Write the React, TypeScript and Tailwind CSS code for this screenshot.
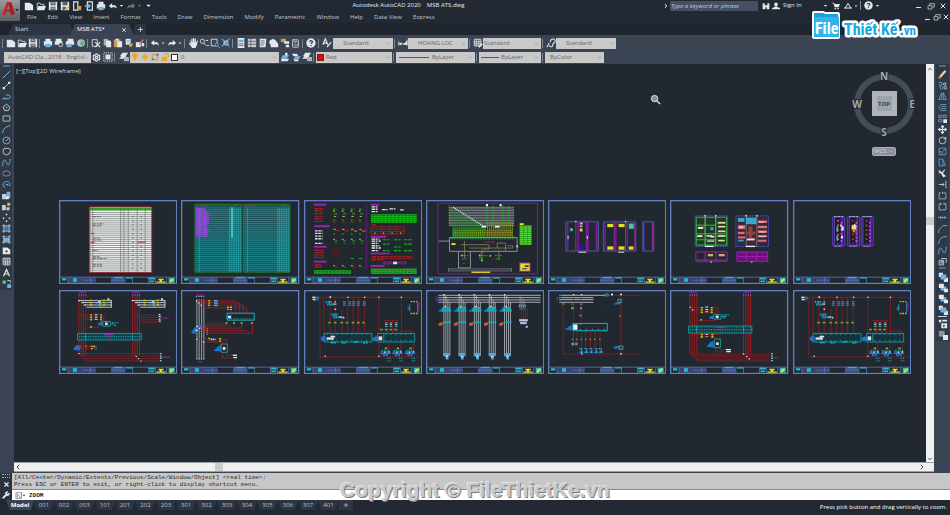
import type { ReactNode } from "react";
import {
  Calculator,
  ChevronDown,
  ChevronLeft,
  ChevronRight,
  ChevronUp,
  Minus,
  Move,
  Plus,
  RotateCw,
  Settings,
  Wrench,
  X,
} from "lucide-react";

/* ---------- icons ---------- */

const L = "#e4e7eb";
const B = "#6fb3e6";

const glyphs: Record<string, ReactNode> = {
  new: <path fill={L} d="M1 2h6l4 3v6H1z" />,
  open: (
    <>
      <path fill="none" stroke={L} d="M1.5 10V2.5h3l1 1.5h4v2" />
      <path fill={L} d="M3 6h9l-2 5H1z" />
    </>
  ),
  save: (
    <>
      <path fill={L} d="M1 1h10v10H1z" />
      <path fill="#56606e" d="M3 1h6v4H3zM3 7h6v4H3z" />
      <path fill={L} d="M4 2h4v1H4zM4 8h4v1H4z" />
    </>
  ),
  saveAs: (
    <>
      <path fill={L} d="M1 1h10v10H1z" />
      <path fill="#56606e" d="M3 1h6v4H3zM3 7h4v4H3z" />
      <path stroke="#e8b05a" strokeWidth="2" d="M6 11l5-5" />
    </>
  ),
  mobile: (
    <>
      <path fill="none" stroke={L} strokeWidth="1.4" d="M2 1h5v10H2z" />
      <path fill="#d9a04a" d="M6 6h5v5H6z" />
    </>
  ),
  phoneOut: (
    <>
      <path fill="none" stroke={L} strokeWidth="1.4" d="M4 1h6v10H4z" />
      <path stroke={B} strokeWidth="2" d="M1 6h6M5 4l2 2-2 2" fill="none" />
    </>
  ),
  plot: (
    <>
      <path fill={L} d="M3 1h6v3H3zM1 4h10v5H1z" />
      <path fill={B} d="M3 7h6v4H3z" />
    </>
  ),
  preview: (
    <>
      <path fill={L} d="M2 1h7v3H2zM1 4h9v4H1z" />
      <circle cx="8" cy="8" r="2.4" fill="#3b4453" stroke={L} />
    </>
  ),
  publish: (
    <>
      <path fill={L} d="M3 1h7v3H3zM1 4h10v4H1z" />
      <path fill={B} d="M2 7h6v4H2z" />
    </>
  ),
  globe: (
    <>
      <circle cx="6" cy="6" r="4.6" fill="#a9c9d8" />
      <path fill="#6cae6c" d="M6 2l4 3-2 5-3-2z" />
    </>
  ),
  find: (
    <>
      <path fill="none" stroke={L} d="M1.5 2h6v8h-6z" />
      <path stroke={L} strokeWidth="1.4" d="M5 5l6 6M11 5l-6 6" />
    </>
  ),
  copy: (
    <>
      <path fill="#aab0b8" d="M2 1h5v8H2z" />
      <path fill={L} d="M5 3h5l1 2v6H5z" />
    </>
  ),
  paste: (
    <>
      <path fill="#c89a55" d="M1 2h8v9H1z" />
      <path fill={L} d="M3 1h4v2H3zM5 4h6v7H5z" />
    </>
  ),
  match: (
    <>
      <path fill={L} d="M2 1h6v7H2z" />
      <path fill="#d9a04a" d="M6 6l5 1-2 4-3-1z" />
      <path stroke={B} d="M3 3h4M3 5h4" />
    </>
  ),
  edit: (
    <>
      <path fill={L} d="M1 5h6v6H1z" />
      <path stroke="#d98a5a" strokeWidth="1.6" d="M5 8l5-6" />
      <path fill={L} d="M8 6h3v4H8z" />
    </>
  ),
  undo: <path fill={L} d="M1 6l4-3.5V5h4l2 4-3-1.5H5V9z" />,
  redo: <path fill={L} d="M11 6L7 2.5V5H3L1 9l3-1.5h3V9z" />,
  caret: <path fill={L} d="M3 5h6L6 8z" />,
  hand: <path fill={L} d="M2 3h1l1 2V1h1.500v4h.5V0h1.500v5H8V1h1.500v4h.5l1-2h1l-1.500 6L9 12H5L1 6.500l1-1L4 7z" />,
  zoomRt: (
    <>
      <circle cx="4" cy="4" r="2.5" fill="none" stroke={L} />
      <path stroke={L} d="M6 6l2 3M8 3h3M9 9h3" />
    </>
  ),
  zoomWin: (
    <>
      <path fill="none" stroke={L} d="M1.5 1.5h7v8h-7z" />
      <circle cx="8" cy="8" r="2" fill="#3b4453" stroke={B} />
      <path stroke={B} d="M9.5 9.5L12 12" />
    </>
  ),
  zoomPrev: (
    <>
      <path stroke={B} strokeWidth="1.5" d="M1 1l9 9M10 1l-9 9" />
      <circle cx="6" cy="6" r="2.6" fill="none" stroke={L} />
    </>
  ),
  palette: (
    <>
      <path fill={L} d="M2 0h8v12H2z" />
      <path fill={B} d="M3 2h6v3H3z" />
      <path stroke="#56606e" d="M3 7h6M3 9h6" />
    </>
  ),
  center: (
    <>
      <path fill="#c9cdd3" d="M1 1h10v10H1z" />
      <path stroke="#56606e" d="M1 4h10M1 7.5h10M4.5 1v10" />
    </>
  ),
  toolPal: (
    <>
      <path fill={L} d="M2 1h8l-1 10H2z" />
      <path stroke="#56606e" d="M3 3.5h5M3 6h5M3 8.5h4" />
    </>
  ),
  sheetSet: <path fill={L} d="M1 3l4-2 3 2 3 4v4H2V8L0 6z" />,
  markup: (
    <>
      <path fill="#d9a04a" d="M1 1h6v4H1z" />
      <path fill={L} d="M5 4h6v3H5zM7 8h4v3H7z" />
    </>
  ),
  help: (
    <>
      <circle cx="6" cy="6" r="5.6" fill={L} />
      <path
        fill="none"
        stroke="#2b3a5e"
        strokeWidth="1.5"
        d="M4.3 4.5C4.5 2.6 7.8 2.7 7.7 4.7 7.6 6 6 5.8 6 7.3M6 8.3v1.4"
      />
    </>
  ),
  textStyle: (
    <>
      <path fill="none" stroke={L} strokeWidth="1.5" d="M1 8l3-7 3 7M2 6h4" />
      <path stroke={L} strokeWidth="1.5" d="M6 11l5-6" />
    </>
  ),
  dimStyle: (
    <>
      <path fill="none" stroke={L} d="M1 4v5M11 2v7M1 7h10" />
      <path fill={L} d="M1 7l3-2v4zM6 8l5-5v5z" />
    </>
  ),
  tableStyle: (
    <>
      <path fill="none" stroke={L} d="M1.5 1.5h8v8h-8zM1 4.5h9M1 7h9M4 1v9M7 1v9" />
      <path stroke={L} strokeWidth="2" d="M7 11l4-4" />
    </>
  ),
  leader: (
    <path
      fill="none"
      stroke={L}
      strokeWidth="1.3"
      d="M1 11l3-5M5 5c0-4 5-5 6-2s-4 3-3 6c0 2-3 2-4 0"
    />
  ),
  wsSettings: (
    <>
      <path fill={L} d="M3 3h6v6H3z" />
      <path stroke={L} strokeDasharray="1.5 1" fill="none" d="M1 1h10v10H1z" />
    </>
  ),
  layers: (
    <>
      <path fill={L} d="M4 1h7L8 5H1zM3 5h6L6 8H0z" />
      <path fill="#aab4c0" d="M6 6h6v5H6z" />
    </>
  ),
  layerMake: (
    <>
      <path fill={L} d="M6 1h3v4H6z" />
      <path fill={B} d="M3 4h8L8 8H1z" />
      <path fill={L} d="M2 8h9l-2 3H1z" />
    </>
  ),
  layerPrev: (
    <>
      <path fill={L} d="M1 2h6l2 3H3z" />
      <path fill={B} d="M5 5h7l-3 4H3z" />
      <path fill={L} d="M3 9h6v2H4z" />
    </>
  ),
  bulb: <path fill="#f0a81c" d="M6 0c5 0 5 5 2 7v3l-2 2-2-2V7C1 5 1 0 6 0z" />,
  sun: (
    <>
      <circle cx="6" cy="6" r="3" fill="#f0a81c" />
      <path stroke="#f0a81c" strokeWidth="1.3" d="M6 0v12M0 6h12M2 2l8 8M10 2l-8 8" />
    </>
  ),
  vpFreeze: (
    <>
      <path fill="none" stroke="#8a8172" d="M2 2h8v8H2z" />
      <path fill="#f0a81c" d="M1 1h3v3H1zM8 8h3v3H8z" />
      <path fill="#77706a" d="M8 1h3v3H8zM1 8h3v3H1z" />
    </>
  ),
  lock: (
    <>
      <path fill="#f0a81c" d="M1 6h8v6H1z" />
      <path fill="none" stroke="#f0a81c" strokeWidth="1.6" d="M6 6V3c0-3 5-3 5 0v3" />
    </>
  ),
  line: <path stroke={B} strokeWidth="1.3" d="M1 11L11 1" />,
  xline: (
    <>
      <path stroke={L} d="M1 11L11 1" />
      <path fill={L} d="M1 8h3v3H1zM8 1h3v3H8z" />
    </>
  ),
  pline: <path fill="none" stroke={B} strokeWidth="1.3" d="M1 9h7c4 0 4-5 0-5H5M1 9l4-1" />,
  polygon: (
    <>
      <path fill="none" stroke={L} d="M6 1.5l4.5 3.5-1.7 5H3.2L1.5 5z" />
      <path fill={B} d="M5 5h2v2H5z" />
    </>
  ),
  rect: <path fill="none" stroke="#b9c2cc" strokeWidth="1.2" d="M1.5 2.5h9v7h-9z" />,
  arc: <path fill="none" stroke={B} strokeWidth="1.3" d="M1 11C1 5 5 2 11 1" />,
  circle: (
    <>
      <circle cx="6" cy="6" r="4.6" fill="none" stroke="#b9c2cc" />
      <path stroke={B} strokeWidth="1.2" d="M6 6l3-3M5 6h2" />
    </>
  ),
  cloud: (
    <path
      fill="none"
      stroke={L}
      strokeWidth="1.2"
      d="M2 5C1 2 4 1 6 2c3-1 6 1 5 4 0 3-3 3-5 5-1-2-4-1-4-3-1-1-1-2 0-3z"
    />
  ),
  spline: <path fill="none" stroke={B} strokeWidth="1.3" d="M1 11C1 1 4 1 6 6s4 5 5-5" />,
  ellipse: <ellipse cx="6" cy="6" rx="5" ry="3.4" fill="none" stroke={B} />,
  ellArc: (
    <path fill="none" stroke={B} strokeWidth="1.3" d="M4 10C-1 8 2 2 6 2s6 4 4 6M5 6h3v2" />
  ),
  insert: (
    <>
      <path fill="#c9cdd3" d="M0 4h6v7H0z" />
      <path fill={B} d="M6 1h5v9H6z" />
      <path fill={L} d="M5 7h4v4H5z" />
    </>
  ),
  block: (
    <>
      <path fill="#c9cdd3" d="M0 4h5v7H0zM6 7h4v4H6z" />
      <path fill="#e8b05a" d="M7 1h4v4H7z" />
    </>
  ),
  point: <path fill={L} d="M5 1h2v2H5zM1 6h2v2H1zM9 6h2v2H9zM5 10h2v2H5z" />,
  hatch: (
    <>
      <path fill="#3c6c9c" d="M2 2h8v8H2z" />
      <path fill="none" stroke={L} d="M2.5 0v12M9.5 0v12M0 2.5h12M0 9.5h12" strokeWidth=".8" />
    </>
  ),
  gradient: (
    <>
      <path fill={B} d="M2 4h8v5H2z" />
      <path fill="none" stroke={L} d="M2.5 0v12M9.5 0v12M0 2.5h12M0 9.5h12" strokeWidth=".8" />
    </>
  ),
  region: (
    <>
      <path fill={L} d="M1 2h6l4 3v6H1z" />
      <circle cx="6" cy="7" r="1.5" fill="#2f3845" />
    </>
  ),
  table: (
    <path fill="none" stroke={L} d="M1.5 1.5h9v9h-9zM1 2.5h10M1 5.5h10M1 8h10M4.5 3v8M7.5 3v8" />
  ),
  mtext: <path fill="none" stroke={L} strokeWidth="1.6" d="M2 11l4-9 4 9M3.5 8h5" />,
  addSel: (
    <>
      <circle cx="3" cy="4" r="2.5" fill="#62c17b" />
      <path fill={B} d="M7 7h5v5H7z" />
      <path stroke={L} d="M7 2h4v3" fill="none" />
    </>
  ),
  erase: (
    <>
      <path stroke="#e9cfa0" strokeWidth="3" d="M3 9l7-8" />
      <path stroke="#e07a6a" strokeWidth="3" d="M1 11l2-2" />
    </>
  ),
  copyObj: (
    <>
      <path fill="none" stroke={B} d="M1 2h4v3H2v2" />
      <circle cx="9" cy="4" r="1.7" fill="none" stroke={L} />
      <circle cx="5" cy="9" r="2" fill="none" stroke={B} />
      <circle cx="10" cy="9" r="1.7" fill="none" stroke={L} />
    </>
  ),
  mirror: <path fill="none" stroke={B} d="M5 1v9H1zM7 1v9h4z" />,
  offset: (
    <path fill="none" stroke={B} d="M11 2H6C0 2 0 10 6 10h5M11 4.5H6.5c-2.5 0-2.5 3 0 3H11" />
  ),
  array: (
    <>
      <path fill="none" stroke={B} d="M1 1.5h4v3H1zM7 1.5h4v3H7zM1 7.5h4v3H1z" />
      <path fill={L} d="M7 7h5v5H7z" />
    </>
  ),
  scale: <path fill="none" stroke={B} d="M1.5 1.5h9v9h-9zM1.5 6.5h4v4M6 6l3-3" />,
  stretch: <path fill="none" stroke={B} d="M1.5 1.5h5v9h-5zM7 3l3 7H7" />,
  trim: <path fill="none" stroke={L} strokeWidth="1.6" d="M1 2l9 8M9 1L5 6l3 5M1 5h6" />,
  extend: <path fill="none" stroke={L} d="M1 6h7M6 4l2 2-2 2M10.5 1v10" />,
  breakAt: <path fill="none" stroke="#b9c2cc" d="M4 2.5H1.500v8h9v-8H7M6 1v3" />,
  breakObj: <path fill="none" stroke="#b9c2cc" d="M4 2.5H1.500v8h9v-8H8M4 1v3M8 1v3" />,
  join: <path fill="none" stroke={B} d="M0 6h12M3.5 4v4M6 5v2M8.5 4v4" />,
  chamfer: <path fill="none" stroke="#a9b9c9" d="M1 12V8l6-6h5" />,
  fillet: <path fill="none" stroke="#a9b9c9" d="M1 12C1 5 5 2 12 2" />,
  explode: (
    <>
      <path fill="none" stroke={L} d="M1.5 4.5h6v6h-6zM4 2h7v6" />
      <circle cx="5" cy="7" r="2" fill={B} />
    </>
  ),
  orderA: (
    <>
      <path fill={L} d="M1 1h5v5H1zM7 7h5v5H7z" />
      <path fill={B} d="M3 3h7v6H3z" />
    </>
  ),
  orderB: (
    <>
      <path fill={B} d="M3 4h7v5H3z" />
      <path fill={L} d="M1 1h6v5H1zM7 7h5v4H7z" />
    </>
  ),
  textFront: (
    <>
      <path fill={L} d="M1 1h3v3H1zM5 1h6v2H5zM4 5h7v6H4z" />
      <path fill="#56606e" d="M6 7h2v3H6z" />
    </>
  ),
  hatchBack: (
    <>
      <path fill="#8a929c" d="M1 1h7v7H1z" />
      <path fill={L} d="M6 6h6v6H6z" />
    </>
  ),
  binoculars: <path fill={L} d="M1 2h3v3h4V2h3v9H7V8H5v3H1z" />,
  person: (
    <>
      <circle cx="6" cy="3.5" r="2.8" fill={L} />
      <path fill={L} d="M5 5h2v2l5 2v2H0V9l5-2z" />
    </>
  ),
  cart: (
    <>
      <path fill={L} d="M0 1h3l1 2h8l-2 5H4L2 2H0z" />
      <circle cx="5" cy="10" r="1.2" fill={L} />
      <circle cx="9" cy="10" r="1.2" fill={L} />
    </>
  ),
  apps: <path fill="none" stroke={L} strokeWidth="1.5" d="M6 2L2 9h8zM0 9h3M9 9h3" />,
  restore: <path fill="none" stroke={L} d="M1.5 5.5h6v5h-6zM4 5V2.5h7v5H8" />,
};

function Glyph({ name, className = "size-[10px]" }: { name: string; className?: string }) {
  return (
    <svg viewBox="0 0 12 12" className={`shrink-0 ${className}`} aria-hidden="true">
      {glyphs[name]}
    </svg>
  );
}

function IconButton({
  label,
  className = "w-[11px]",
  children,
}: {
  label: string;
  className?: string;
  children?: ReactNode;
}) {
  return (
    <button
      type="button"
      aria-label={label}
      className={`flex h-[11px] shrink-0 items-center justify-center text-[#e4e7eb] ${className}`}
    >
      {children ?? <Glyph name={label} />}
    </button>
  );
}

function Sep() {
  return <span className="mr-[2px] ml-px h-[9px] w-px shrink-0 bg-[#7b8594]" />;
}

/* ---------- title bar and menu ---------- */

const menus = [
  "File", "Edit", "View", "Insert", "Format", "Tools", "Draw", "Dimension",
  "Modify", "Parametric", "Window", "Help", "Data View", "Express",
];

function WindowButtons({ className }: { className: string }) {
  return (
    <div className={`flex items-center ${className}`}>
      <IconButton label="Minimize" className="w-[9px] items-end">
        <Minus className="size-[7px]" strokeWidth={4} />
      </IconButton>
      <IconButton label="Restore" className="w-[9px]">
        <Glyph name="restore" className="size-[8px]" />
      </IconButton>
      <IconButton label="Close" className="w-[9px]">
        <X className="size-[8px]" strokeWidth={3} />
      </IconButton>
    </div>
  );
}

function Header() {
  return (
    <header className="flex bg-[#222933]">
      <button
        type="button"
        aria-label="Application menu"
        className="flex h-[21px] w-[20px] shrink-0 items-center justify-center bg-linear-to-b from-[#9a9c9f] to-[#5b5f66]"
      >
        <svg viewBox="0 0 20 21" className="h-full w-full" aria-hidden="true">
          <path fill="#c4242b" d="M2 15L7 2h4l4 12-4 1-1-3H6l-1 3zM7 9h3L9 5z" />
          <path fill="#8e171d" d="M11 2l4 12-4 1-2-9z" opacity=".6" />
          <path fill="#22262c" d="M15 9h4l-2 2z" />
        </svg>
      </button>
      <div className="flex min-w-0 flex-1 flex-col">
        <div className="flex h-[11px] items-center pr-[3px]">
          <div className="flex items-center pl-[3px]">
            {["new", "open", "save", "saveAs", "mobile", "phoneOut", "plot"].map((n) => (
              <IconButton key={n} label={n} className="w-[12px]" />
            ))}
            <IconButton label="undo" />
            <IconButton label="undo list" className="w-[7px]">
              <Glyph name="caret" className="size-[7px]" />
            </IconButton>
            <span className="flex opacity-40">
              <IconButton label="redo" />
              <IconButton label="redo list" className="w-[7px]">
                <Glyph name="caret" className="size-[7px]" />
              </IconButton>
            </span>
            <IconButton label="Customize">
              <Glyph name="caret" className="size-[9px]" />
            </IconButton>
          </div>
          <h1 className="flex flex-1 justify-center gap-[6px] whitespace-nowrap text-[6px] text-[#eceef0]">
            <span>Autodesk AutoCAD 2020</span>
            <span>MSB ATS.dwg</span>
          </h1>
          <ChevronRight className="size-[6px] text-white" strokeWidth={4} />
          <input
            aria-label="Search"
            placeholder="Type a keyword or phrase"
            className="ml-px h-[10px] w-[88px] bg-[#475063] px-px text-[6px] italic placeholder:text-[#c5cad2]"
          />
          <IconButton label="binoculars" className="ml-[2px] w-[11px]">
            <Glyph name="binoculars" className="size-[8px]" />
          </IconButton>
          <button type="button" className="flex w-[51px] items-center gap-[3px] pl-px text-[6px] text-[#e4e7eb]">
            <Glyph name="person" className="size-[8px]" />
            Sign In
          </button>
          <div className="flex w-[60px] items-center">
            <Glyph name="caret" className="size-[7px]" />
            <IconButton label="cart" className="w-[13px]">
              <Glyph name="cart" className="size-[8px]" />
            </IconButton>
            <IconButton label="apps">
              <Glyph name="apps" className="size-[8px]" />
            </IconButton>
            <Glyph name="caret" className="size-[6px]" />
            <Sep />
            <IconButton label="help">
              <Glyph name="help" className="size-[9px]" />
            </IconButton>
            <Glyph name="caret" className="size-[7px]" />
          </div>
          <WindowButtons className="ml-[32px] gap-[3px]" />
        </div>
        <nav className="flex h-[12px] items-center pl-[7px] text-[6px] text-[#c3c8cf]">
          <div className="flex gap-[11px]">
            {menus.map((m) => (
              <button key={m} type="button" className="whitespace-nowrap">
                {m}
              </button>
            ))}
          </div>
          <WindowButtons className="ml-auto" />
        </nav>
      </div>
    </header>
  );
}

function FileTabs() {
  return (
    <div className="flex h-[12px] items-end bg-[#1f252e] pl-[8px] text-[6px] text-[#d5d9de]">
      <button
        type="button"
        className="h-[11px] w-[66px] bg-[#2d3542] pl-[7px] text-left [clip-path:polygon(5px_0,62px_0,100%_100%,0_100%)]"
      >
        Start
      </button>
      <div className="-ml-[4px] flex h-[11px] w-[64px] items-center justify-between bg-[#3b4453] pr-[7px] pl-[7px] text-white [clip-path:polygon(5px_0,59px_0,100%_100%,0_100%)]">
        <button type="button">MSB ATS*</button>
        <button type="button" aria-label="Close drawing">
          <X className="size-[6px]" strokeWidth={3} />
        </button>
      </div>
      <button
        type="button"
        aria-label="New drawing"
        className="flex h-[11px] w-[12px] items-center justify-center rounded-t-[3px] bg-[#2d3542]"
      >
        <Plus className="size-[7px]" strokeWidth={3} />
      </button>
    </div>
  );
}

/* ---------- toolbars ---------- */

function Select({
  label,
  value,
  className,
  children,
}: {
  label: string;
  value: string;
  className: string;
  children?: ReactNode;
}) {
  return (
    <div className={`relative flex h-[11px] shrink-0 items-center bg-[#c9c9c9] ${className}`}>
      {children}
      <select
        aria-label={label}
        className="h-full min-w-0 flex-1 appearance-none text-[6px] text-[#666]"
      >
        <option>{value}</option>
      </select>
      <ChevronDown
        className="pointer-events-none absolute right-[2px] size-[5px] text-[#8a8a8a]"
        strokeWidth={3}
      />
    </div>
  );
}

function Toolbars() {
  return (
    <div className="flex flex-col gap-px bg-[#3b4453] py-px">
      <div className="flex h-[14px] items-center pl-px">
        <Sep />
        {["new", "open", "save"].map((n) => <IconButton key={n} label={n} />)}
        <Sep />
        {["plot", "preview", "publish", "globe"].map((n) => <IconButton key={n} label={n} />)}
        <Sep />
        {["find", "copy", "paste", "match", "edit"].map((n) => <IconButton key={n} label={n} />)}
        <Sep />
        <IconButton label="undo" />
        <Glyph name="caret" className="size-[6px]" />
        <IconButton label="redo" />
        <Glyph name="caret" className="size-[6px]" />
        <Sep />
        {["hand", "zoomRt", "zoomWin", "zoomPrev"].map((n) => (
          <IconButton key={n} label={n} />
        ))}
        <Sep />
        {["palette", "center", "toolPal", "sheetSet", "markup"].map((n) => (
          <IconButton key={n} label={n} />
        ))}
        <IconButton label="Calculator">
          <Calculator className="size-[9px]" strokeWidth={2} />
        </IconButton>
        <Sep />
        <IconButton label="help" className="w-[12px]" />
        <Sep />
        <IconButton label="textStyle" className="w-[12px]" />
        <Select label="Text style" value="Standard" className="w-[60px] pl-[10px]" />
        <Sep />
        <IconButton label="dimStyle" />
        <Select label="Dimension style" value="HOANG LOC" className="w-[60px] pl-[10px]" />
        <Sep />
        <IconButton label="tableStyle" />
        <Select label="Table style" value="Standard" className="w-[58px] pl-px" />
        <Sep />
        <IconButton label="leader" />
        <Select label="Multileader style" value="Standard" className="w-[60px] pl-[10px]" />
      </div>
      <div className="flex h-[12px] items-center pl-[4px]">
        <Select label="Workspace" value="AutoCAD Cla...2018 - Englisl" className="w-[87px] pl-[4px]" />
        <IconButton label="Workspace settings">
          <Settings className="size-[9px]" strokeWidth={3} />
        </IconButton>
        <IconButton label="wsSettings" />
        <Sep />
        <IconButton label="layers" className="w-[13px]" />
        <Select label="Layer" value="0" className="w-[149px] gap-px pl-px">
          {["bulb", "sun", "vpFreeze", "lock"].map((n) => (
            <Glyph key={n} name={n} className="mr-px size-[8px]" />
          ))}
          <span className="mr-[2px] size-[7px] border border-[#333] bg-white" />
        </Select>
        {["layerMake", "layerPrev", "layers"].map((n) => <IconButton key={n} label={n} />)}
        <Sep />
        <Select label="Color" value="Red" className="w-[76px] gap-[2px] pl-px">
          <span className="size-[7px] border border-[#6b2020] bg-[#e8080c]" />
        </Select>
        <Sep />
        <Select label="Linetype" value="ByLayer" className="w-[79px] gap-[3px] pl-[3px]">
          <span className="h-px w-[30px] bg-[#555]" />
        </Select>
        <Sep />
        <Select label="Lineweight" value="ByLayer" className="w-[62px] gap-[2px] pl-[2px]">
          <span className="h-px w-[18px] bg-[#555]" />
        </Select>
        <Sep />
        <Select label="Plot style" value="ByColor" className="w-[59px] pl-[5px]" />
      </div>
    </div>
  );
}

const drawTools = [
  "line", "xline", "pline", "polygon", "rect", "arc", "circle", "cloud", "spline", "ellipse",
  "ellArc", "insert", "block", "point", "hatch", "gradient", "region", "table", "mtext", "addSel",
];

function DrawToolbar() {
  return (
    <aside className="w-[14px] shrink-0 bg-[#3b4453]">
      <div className="mr-[2px] flex flex-col items-center bg-[#2f3845] pt-px pb-px">
        <span className="mb-[2px] h-[2px] w-[7px] bg-[#5c6675]" />
        {drawTools.map((n) => (
          <IconButton key={n} label={n}>
            <Glyph name={n} className="size-[9px]" />
          </IconButton>
        ))}
      </div>
    </aside>
  );
}

function ModifyToolbar() {
  return (
    <aside className="w-[16px] shrink-0 bg-[#3b4453] pl-[2px]">
      <div className="mr-px flex flex-col items-center bg-[#2f3845] pt-px pb-px">
        <span className="mb-[2px] h-[2px] w-[7px] bg-[#5c6675]" />
        {["erase", "copyObj", "mirror", "offset", "array"].map((n) => (
          <IconButton key={n} label={n}>
            <Glyph name={n} className="size-[9px]" />
          </IconButton>
        ))}
        <IconButton label="Move">
          <Move className="size-[9px]" strokeWidth={3} />
        </IconButton>
        <IconButton label="Rotate">
          <RotateCw className="size-[9px]" strokeWidth={2} />
        </IconButton>
        {[
          "scale", "stretch", "trim", "extend", "breakAt", "breakObj", "join", "chamfer", "fillet",
          "spline", "explode",
        ].map((n) => (
          <IconButton key={n} label={n}>
            <Glyph name={n} className="size-[9px]" />
          </IconButton>
        ))}
        <span className="mb-[2px] h-[2px] w-[7px] bg-[#5c6675]" />
        {["orderA", "orderB"].map((n) => <IconButton key={n} label={n} />)}
        <IconButton label="Above objects">
          <Glyph name="orderB" />
        </IconButton>
        <IconButton label="Under objects">
          <Glyph name="orderA" />
        </IconButton>
        <span className="my-px h-px w-[9px] bg-[#d5d9de]" />
        {["textFront", "hatchBack"].map((n) => <IconButton key={n} label={n} />)}
      </div>
    </aside>
  );
}

/* ---------- drawing sheets ---------- */

const RED = "#a81c20";
const CYAN = "#16b4bd";
const TEAL = "#189298";
const GREEN = "#14b41c";
const YELLOW = "#c9c41c";
const MAGENTA = "#a01fb0";
const BLUE = "#1d72c8";
const WHITE = "#dfe3e6";
const GRAY = "#8b9094";

type Box = [number, number, number, number];

function Lines({ d, c, w = 2, dash }: { d: string; c: string; w?: number; dash?: string }) {
  return <path d={d} fill="none" stroke={c} strokeWidth={w} strokeDasharray={dash} />;
}

function Marks({ c, at }: { c: string; at: Box[] }) {
  return (
    <g fill={c}>
      {at.map(([x, y, w, h]) => (
        <rect key={`${x}-${y}`} x={x} y={y} width={w} height={h} />
      ))}
    </g>
  );
}

// n values starting at a, step apart
const run = (a: number, n: number, step: number) => Array.from({ length: n }, (_, i) => a + i * step);

const rows = (x1: number, x2: number, ys: number[]) => ys.map((y) => `M${x1} ${y}H${x2}`).join("");
const cols = (y1: number, y2: number, xs: number[]) => xs.map((x) => `M${x} ${y1}V${y2}`).join("");

function Sheet({ children }: { children: ReactNode }) {
  return (
    <svg viewBox="0 0 357 254" className="block h-auto w-full" aria-hidden="true">
      {children}
      <rect x="27" y="233" width="84" height="18" fill="#36446f" />
      <rect x="157" y="233" width="43" height="18" fill="#3d4f80" />
      <Lines c="#5873b0" w={2.5} d="M0 233H357M27 233V252M71 242H111M95 233V252M157 242H200M222 233V252M270 233V252M291 233V252M325 233V252" />
      <Marks c="#28b8c8" at={[[9, 236, 13, 7], [42, 236, 12, 11], [165, 232, 27, 4], [202, 233, 20, 4], [271, 234, 18, 6], [273, 243, 14, 5], [331, 235, 18, 15]]} />
      <path fill="#e3e020" d="M294 250v-4h10v-4h-4v-4h16v4h-5v4h11v4zM336 240l10-4v6l-6 4v4h-6z" />
      <rect x="2" y="2" width="353" height="250" fill="none" stroke="#617fc0" strokeWidth="4" />
    </svg>
  );
}

function MaterialList() {
  return (
    <Sheet>
      <rect x="92" y="21" width="188" height="198" fill="#f4f5f5" />
      <rect x="92" y="23" width="188" height="9" fill="#3f9a2c" />
      <Lines c="#3a4044" w={1.6} d={rows(93, 279, run(38, 30, 6.2))} />
      <Lines c="#555b60" w={1.6} d={cols(23, 218, [102, 186, 196, 209, 236, 260])} />
      <Lines c="#4d5358" w={2.5} dash="9 3 6 2" d="M102 50H126M102 72H136M102 78H128M102 115H124M102 121H128M102 152H118M102 171H124M102 177H144M102 194H130M102 200H130" />
      <Lines c="#4d5358" w={3} dash="4 9" d={cols(48, 210, [223, 248])} />
      <Lines c="#a82024" w={2.5} d="M93 21V219H280V21ZM96 101H108M96 128H108M236 127H262" />
    </Sheet>
  );
}

function CableTable() {
  return (
    <Sheet>
      {[42, 188].map((x) => (
        <g key={x}>
          <rect x={x} y="13" width="141" height="205" fill="#1c4f58" />
          <Lines c="#1fa3a6" w={2} d={rows(x, x + 141, run(28, 31, 6.2))} />
          <Lines c="#2cc5c8" w={1.5} d={cols(22, 218, [x + 13, ...run(x + 104, 7, 5.5)])} />
          <Lines c="#1e7a2a" w={3} d={`M${x} 13H${x + 141}V218H${x}ZM${x} 22H${x + 141}`} />
          <Lines c={MAGENTA} w={3} dash="9 2" d={`M${x + 5} 18H${x + 40}M${x + 116} 17H${x + 130}`} />
        </g>
      ))}
      <Lines
        c="#8a4fd0"
        w={4}
        dash="20 1 14 1"
        d="M45 26H72M45 32H76M45 38H82M45 44H84M45 50H84M45 56H84M45 62H84M45 68H84M45 74H80M45 80H78M45 86H82M45 92H84M45 98H80M45 104H80M45 110H80"
      />
      <Lines c="#45e3e8" w={4} d="M154 22V114" />
    </Sheet>
  );
}

function LegendSheet() {
  return (
    <Sheet>
      <Marks c={MAGENTA} at={[[30, 11, 38, 6], [30, 76, 48, 6], [30, 138, 38, 6], [30, 183, 38, 6], [201, 11, 27, 6], [201, 108, 47, 6], [201, 159, 58, 5], [201, 196, 42, 6]]} />
      <rect x="186" y="12" width="5" height="198" fill="#4c2064" />
      <Lines c="#b32024" w={3.5} dash="12 2 7 2" d={rows(32, 58, [26, 33, 41, 49, 57, 65]) + rows(32, 60, [152, 159, 166, 173]) + rows(32, 54, [196, 202])} />
      <Lines c={WHITE} w={4} dash="8 2" d={rows(33, 56, [93, 101, 109, 117, 131])} />
      {[88, 114, 141, 166].map((x, i) => (
        <g key={x}>
          <Marks c={GREEN} at={[[x, 25, 6, 3], [x + 4, 40, 9, 3], [x, 59, 6, 3], [x, 101, 6, 3], [x + 4, 122, 9, 3]]} />
          <Marks c={YELLOW} at={[[x, 31, 5, 4], [x + 2, 48, 7, 3], [x + 1, 87, 7, 3], [x, 117, 6, 3], [x, 197, 6, 3]]} />
          <Marks c="#b32024" at={[[x + 5, 27, 7, 3], [x, 65, 9, 3], [x + 8, 91, 12, 3], [x + 5, 130, 8, 3], [x + 6, 201, 7, 3]]} />
          {i > 1 && <Marks c={GREEN} at={[[x, 175, 9, 3], [x + 10, 93, 10, 3]]} />}
        </g>
      ))}
      <Lines c="#b32024" dash="3 4" d={cols(150, 178, [92, 99, 106])} />
      <Marks c={GREEN} at={[[30, 212, 112, 11], [202, 43, 138, 26], [202, 207, 138, 16]]} />
      <Lines c="#0b4f18" w={2} dash="8 3" d={rows(32, 140, [216, 220]) + rows(204, 338, [47, 53, 59, 65, 212, 218])} />
      <Lines c="#d84040" w={3} dash="4 12" d="M216 214H330" />
      <Lines c="#a02024" w={2.5} d="M202 81H303V103H202ZM202 88H303M202 95H303M235 81V103M258 81V103M280 81V103" />
      <Lines c={YELLOW} w={4} dash="4 22" d="M212 100H300" />
      <Lines c={WHITE} w={4} dash="11 2 5 3" d="M204 21H222M204 28H222M204 35H222M235 29H252M258 27H278M290 30H302M204 118H228M204 124H232M204 131H226M204 138H228M204 145H232M204 153H226" />
      <Lines c={GREEN} w={3.5} dash="10 3" d="M238 120H258M272 120H292M302 120H325M238 133H258M272 142H292M302 133H325M238 153H258M272 153H292M302 153H325" />
      <Lines c="#b32024" w={3} dash="14 2 8 2" d="M204 75H220M204 171H326M204 176H330M204 181H240" />
      <Lines c={MAGENTA} w={2.5} d="M241 187H262V193H241ZM287 187H308V193H287ZM262 190H287" />
      <Marks c={WHITE} at={[[269, 186, 12, 8]]} />
    </Sheet>
  );
}

function TerminalSheet() {
  return (
    <Sheet>
      <Lines c="#7c1f8a" w={3} d="M36 10H336V223H36Z" />
      <Lines c="#7c8186" w={3} d={rows(70, 266, run(22, 12, 5))} />
      <Lines c="#158a1e" w={2.5} d={run(82, 17, 6).map((x, i) => `M${x} ${24 + i * 3}V112`).join("")} />
      <Lines c="#1a9a22" w={3} d={cols(82, 112, run(82, 17, 6))} />
      <Lines c="#9c9a1c" w={2.5} d={cols(66, 112, run(186, 13, 6.2))} />
      <Lines c="#1fa828" w={2.5} d={cols(15, 80, [184, 202, 232, 250])} />
      <Lines c="#ecefee" w={4} dash="3 3" d="M82 22L172 78" />
      <Lines c="#c9c41c" w={3} dash="2 3" d={cols(92, 108, run(84, 29, 6.2)) + "M70 16V76"} />
      <Lines c={GRAY} w={3} d="M38 124H71M71 113H275V155H71ZM98 155V205H134V155" />
      <Lines c="#8a8050" w={2.5} d="M105 135H190V148H170M130 145H215V130H240V155M116 124V176M168 150V180M220 150V180M215 145H262V138H245" />
      <Lines c="#29b52d" w={3} dash="5 3" d="M76 117H270M108 168H128M160 168H186M208 168H232M110 178H126M160 176H176M210 178H226" />
      <Lines c="#c0403a" w={3} dash="5 3" d="M176 127H206M112 192H118M165 158H176" />
      <Marks c="#e2e022" at={[[77, 130, 12, 6], [106, 165, 4, 5], [160, 165, 4, 5], [192, 166, 4, 5], [166, 180, 5, 5], [283, 70, 12, 6], [137, 216, 57, 4]]} />
      <rect x="282" y="76" width="37" height="60" fill="#24a81e" />
      <Lines c="#d6de28" w={2} dash="9 3" d={rows(284, 317, run(82, 9, 6.3))} />
      <Lines c={GRAY} w={2} d="M68 208H258M68 214H258M68 206V216M258 206V216" />
      <rect x="283" y="190" width="31" height="25" fill="#e2e022" stroke={MAGENTA} strokeWidth="3" />
      <Marks c="#2a2f33" at={[[298, 197, 12, 5], [290, 206, 16, 3]]} />
      <Marks c="#f0f2f2" at={[[181, 12, 6, 7], [222, 12, 6, 7], [168, 78, 14, 5], [208, 78, 14, 5], [273, 137, 4, 6]]} />
    </Sheet>
  );
}

function CabinetFrontSheet() {
  return (
    <Sheet>
      <Lines c="#58608a" w={3} d="M54 66H152V154H54ZM167 66H265V154H167ZM286 66H319V154H286Z" />
      <Lines c={MAGENTA} w={3} d="M60 70V150M84 66V154M91 66V154M117 66V154M121 66V154M146 70V150M172 70V150M200 66V154M205 66V154M234 66V154M239 66V154M262 70V150M289 68V152M315 68V152" />
      <Lines c="#2e35c8" w={2.5} dash="7 3" d="M54 64H150M54 156H150M167 64H265M167 156H265M286 64H318M286 156H318M57 68V152M114 68V152M149 68V152M169 68V152M291 72V150" />
      <Marks c="#e3e020" at={[[179, 72, 18, 10], [213, 72, 18, 10], [179, 140, 18, 10], [213, 140, 18, 10], [244, 140, 14, 10], [96, 86, 8, 9]]} />
      <Marks c="#45c5a8" at={[[244, 71, 15, 16], [67, 85, 8, 9]]} />
      <Marks c="#d9a8e0" at={[[96, 68, 9, 6], [96, 77, 8, 5]]} />
      <Marks c="#1c20a8" at={[[94, 138, 13, 10], [127, 76, 16, 4]]} />
      <Marks c={WHITE} at={[[92, 156, 24, 3], [212, 156, 18, 3], [59, 108, 3, 10], [82, 63, 4, 4], [117, 108, 3, 10], [232, 63, 4, 4]]} />
    </Sheet>
  );
}

function CabinetInsideSheet() {
  return (
    <Sheet>
      <rect x="79" y="52" width="92" height="84" fill="#203828" />
      <rect x="202" y="52" width="92" height="84" fill="#3a2836" />
      <Lines c="#39b83e" w={3} d="M79 52H171V136H79ZM106 52V136M138 52V136M79 76H138M79 102H171M106 120H138M79 120H104M142 70H168M142 110H168" />
      <Lines c="#4b55c8" w={3} dash="6 2" d="M76 48H174V140H76ZM199 48H297V140H199Z" />
      <Lines c={GRAY} w={2} d="M106 46V142M138 46V142M230 46V142M262 46V142" />
      <Marks c="#e8d8a0" at={[[84, 81, 17, 6], [82, 106, 16, 6], [145, 66, 22, 5], [145, 78, 22, 5], [145, 92, 22, 5], [145, 106, 22, 5], [145, 120, 20, 5], [110, 106, 16, 5], [112, 122, 22, 4]]} />
      <Marks c="#eef0f0" at={[[86, 83, 10, 4], [122, 108, 12, 5], [106, 138, 26, 4], [229, 138, 28, 4]]} />
      <Marks c="#38a8c8" at={[[205, 54, 20, 12], [229, 53, 32, 20], [122, 82, 9, 9], [206, 120, 16, 5]]} />
      <Marks c="#d8707c" at={[[205, 76, 22, 12], [205, 96, 20, 7], [205, 110, 22, 6], [265, 62, 28, 7], [265, 78, 28, 7], [265, 92, 28, 7], [265, 106, 28, 6], [265, 120, 26, 6]]} />
      <Marks c="#9a4034" at={[[237, 80, 12, 34], [232, 96, 26, 8]]} />
      <Marks c="#f2d0d6" at={[[209, 80, 12, 4], [268, 95, 20, 3], [268, 109, 20, 3], [232, 116, 24, 6], [268, 65, 16, 3]]} />
      <rect x="202" y="157" width="93" height="28" fill="#6a1478" />
      <Lines c={MAGENTA} w={3} d="M78 157H172V185H78ZM106 157V185M138 157V185M202 157H295V185H202ZM202 171H295M230 157V185M262 157V185M78 181H172" />
      <Marks c="#c9b45c" at={[[114, 163, 16, 7], [147, 163, 18, 7]]} />
      <Marks c={WHITE} at={[[122, 186, 5, 3], [244, 186, 5, 3], [104, 45, 4, 5], [136, 45, 4, 5], [228, 45, 4, 5], [260, 45, 4, 5]]} />
      <Marks c="#7a2226" at={[[319, 18, 5, 2]]} />
    </Sheet>
  );
}

function CabinetSideSheet() {
  return (
    <Sheet>
      {[120, 165, 206].map((x, i) => (
        <g key={x}>
          <rect x={x} y="51" width="36" height="88" fill="#2c1a52" />
          <rect x={x + 7} y="55" width="15" height="78" fill="#201c28" />
          <Lines c="#5a3fb8" w={3} d={`M${x} 51H${x + 36}V139H${x}ZM${x + 5} 53V137`} />
          <Lines c="#7a20d8" w={4} d={`M${x + 29} 53V137`} />
          <Lines c="#d060d8" w={4} dash="6 5" d={`M${x + 26} 66V134`} />
          <Lines c={i ? "#8e5a36" : "#e07a58"} w={5} dash="5 9" d={`M${x + 16} 60V132`} />
          <Lines c="#9ab0d8" w={3} dash="8 2" d={`M${x + 4} 50H${x + 32}M${x + 6} 139H${x + 28}`} />
        </g>
      ))}
      <Marks c="#28c8a0" at={[[131, 80, 5, 16], [131, 107, 5, 16]]} />
      <Marks c="#f0e070" at={[[177, 76, 14, 13], [142, 74, 6, 6]]} />
      <Marks c="#e87040" at={[[180, 88, 8, 10]]} />
      <Marks c="#eef0f0" at={[[146, 80, 7, 12], [145, 108, 6, 8], [184, 72, 4, 6]]} />
    </Sheet>
  );
}

// incoming feeder bars shared by the two ATS sheets
function Feeders({ xs, top, bottom }: { xs: number[]; top: number; bottom: number }) {
  return (
    <>
      {xs.map((x) => (
        <g key={x}>
          <Lines c={RED} w={2.5} d={cols(top + 12, bottom, run(x, 4, 7))} />
          <Lines c={MAGENTA} w={4} dash="3 1" d={`M${x - 1} ${top + 3}H${x + 23}`} />
          <Lines c="#a8b0c8" w={3} dash="3 4" d={`M${x - 1} ${top + 11}H${x + 23}`} />
        </g>
      ))}
    </>
  );
}

function AtsSheet() {
  return (
    <Sheet>
      <Feeders xs={[60, 222]} top={4} bottom={196} />
      {[60, 222].map((x) => (
        <g key={x}>
          <Lines c={WHITE} w={2.5} d={`M${x} 32H${x + 98}M${x + 8} 38H${x + 98}M${x + 15} 45H${x + 98}M${x + 23} 52H${x + 98}M${x + 98} 30V53`} />
          <Lines c={YELLOW} w={5} dash="5 2" d={`M${x + 36} 29V50M${x + 76} 29V50M${x + 64} 32V50`} />
          <Lines c={GREEN} w={3} dash="6 2" d={`M${x + 68} 28V52M${x + 82} 28V52`} />
          <Lines c={BLUE} w={6} dash="3 2" d={`M${x + 54} 29V51`} />
          <Marks c={WHITE} at={[[x + 86, 25, 6, 5], [x + 58, 34, 5, 5], [x - 2, 30, 4, 4], [x + 9, 37, 4, 3], [x + 16, 44, 4, 3]]} />
        </g>
      ))}
      <Lines c={RED} d="M60 75H140V95M67 82H134V95M75 89H128V95M83 112H120M120 99V112M222 76H300M230 83H300M237 90H300M245 97H300" />
      <Lines c={YELLOW} w={5} dash="5 2" d="M97 73V92M127 73V92M97 109V114" />
      <Lines c={WHITE} w={8} dash="3 4" d="M112 73V93" />
      <path fill={BLUE} d="M117 100l14-6v14l-12-2zM44 176l8-9h14v7l-5 8H47z" />
      <Lines c="#2a8fb0" w={3} d="M132 95H155V109H132Z" />
      <Marks c={WHITE} at={[[139, 98, 8, 8], [301, 72, 5, 4], [301, 78, 6, 4], [301, 86, 5, 4], [301, 92, 6, 4]]} />
      <Lines c={CYAN} w={3} dash="6 2" d="M160 99H180M158 103H168M166 107H174" />
      <Lines c={MAGENTA} w={4} dash="3 1" d="M308 85H332M308 203H336" />
      <rect x="56" y="131" width="192" height="20" fill="#16363e" />
      <Lines c={TEAL} w={3} d="M56 131H248V151H56ZM80 131V151M222 131V151" />
      <Lines c={CYAN} w={3} dash="4 3" d="M60 141H246" />
      <Lines c={CYAN} w={2} dash="2 5" d="M60 135H246M60 147H246" />
      <Marks c={MAGENTA} at={[[138, 133, 28, 4], [148, 140, 8, 4]]} />
      <Lines c={RED} d="M60 170H105M68 177H112M60 192L68 200M60 192H302M67 199H302M75 207H302M83 214H302M62 192L84 214" />
      <Lines c={YELLOW} w={6} dash="4 3" d="M99 168V182" />
      <Lines c={BLUE} w={5} dash="3 2" d="M112 168V182" />
      <Marks c={WHITE} at={[[104, 168, 4, 5], [80, 168, 3, 3], [58, 190, 4, 3], [231, 199, 4, 3], [238, 206, 4, 3], [245, 213, 4, 3]]} />
      <Lines c="#9ad0d8" w={5} dash="4 3" d="M307 190V216" />
    </Sheet>
  );
}

function BusbarSheet() {
  return (
    <Sheet>
      <Lines c={GRAY} w={3.5} d={cols(28, 210, run(48, 4, 7))} />
      <Lines c={MAGENTA} w={4} dash="3 1" d="M45 15H71M52 217H64" />
      <Lines c="#a8b0c8" w={3} dash="4 3" d="M45 20H71M45 208H71" />
      <Lines c={RED} w={2.5} d="M48 33H164V70M54 39H176V70M60 46H188V70M68 54H198V70M151 36V70M60 108H150M68 115H184M70 123H200M160 92V108M183 92V115M216 92V130H76M140 92V102H72M48 149H138V165M68 157H125V165M125 190V205H155M138 190V197H155" />
      <Marks c={WHITE} at={[[45, 31, 4, 4], [52, 37, 4, 4], [59, 44, 4, 4], [46, 147, 4, 4], [66, 155, 4, 4], [156, 195, 13, 4], [158, 202, 11, 4], [126, 172, 8, 9]]} />
      <Lines c={YELLOW} w={6} dash="4 3" d="M85 30V52M85 144V152M118 145V158M137 98V104M160 98V104M183 98V104M214 98V104M142 50V60M151 50V60" />
      <Marks c="#4aa0d8" at={[[99, 30, 12, 5], [100, 37, 11, 5], [99, 44, 12, 5]]} />
      <Lines c={WHITE} w={5} dash="4 2" d="M90 149H104" />
      <Lines c={CYAN} w={3} d="M139 70H221V91H139Z" />
      <Lines c={CYAN} w={2} dash="4 3" d="M143 87H219" />
      <path fill={BLUE} d="M135 80l10-4h8v12h-13zM30 129l10-14 14-10h10l-8 16-12 12zM98 184l14-14 10-4v20z" />
      <Marks c="#d0f0f8" at={[[142, 78, 8, 7], [46, 108, 5, 4], [54, 114, 5, 4], [44, 120, 6, 4]]} />
      <Lines c="#d02a2a" w={3} d="M50 126L70 106M58 126L76 108M66 122H80" />
      <Lines c="#a8b0c8" w={3} dash="3 3" d="M79 114V136" />
      <Lines c={TEAL} w={3} d="M121 163H140V188H121Z" />
    </Sheet>
  );
}

function ControlSheet() {
  return (
    <Sheet>
      <Lines c={RED} d="M36 22H349M48 22V202M60 22V130M48 202H348M226 22V202M294 22V130M78 22V130M94 22V130M115 58V130M132 22V130M148 22V130M164 22V130M182 22V130M240 92H282V130M252 92V130M267 92V130M294 124H328V130M256 158V180M292 158V180M330 158V180" />
      <Marks c={WHITE} at={[[25, 20, 10, 5], [26, 27, 9, 4], [77, 19, 5, 5], [131, 20, 4, 4], [181, 20, 4, 4], [224, 20, 4, 4], [292, 20, 4, 4], [62, 198, 4, 4], [224, 198, 4, 4], [92, 56, 5, 4]]} />
      <Marks c={BLUE} at={[[37, 20, 8, 7], [36, 28, 7, 4]]} />
      <Lines c={CYAN} w={6} dash="4 3 6 2" d="M66 36H84M70 44H90M82 74H104M88 82H120" />
      <Marks c={BLUE} at={[[72, 37, 8, 6], [86, 76, 10, 6], [313, 52, 8, 7]]} />
      <Marks c={WHITE} at={[[88, 41, 10, 3], [92, 34, 4, 4], [106, 80, 8, 3], [117, 82, 5, 4]]} />
      <Lines c="#3c7fb0" w={9} dash="4 2" d={cols(34, 48, [122, 138, 150, 164, 182])} />
      <Lines c="#7ac0d0" w={7} dash="3 2" d={cols(98, 112, [248, 262, 278])} />
      <Marks c="#8a9c28" at={[[73, 96, 8, 5], [90, 96, 8, 5], [110, 96, 8, 5], [126, 96, 8, 5], [144, 96, 8, 5], [160, 96, 8, 5], [176, 96, 8, 5], [230, 117, 8, 5], [244, 117, 8, 5], [258, 117, 8, 5], [272, 117, 8, 5]]} />
      <rect x="60" y="131" width="145" height="26" fill="#15333a" />
      <rect x="222" y="131" width="112" height="26" fill="#15333a" />
      <Lines c={TEAL} w={3} d="M60 131H205V157H60ZM222 131H334V157H222ZM241 131V157" />
      <Lines c={CYAN} w={3} dash="3 12" d="M68 153H200M246 153H330M68 134H200M246 134H330" />
      <Lines c={CYAN} w={5} dash="7 2" d="M82 159H96M113 159H127M150 157H164M178 159H192" />
      <path fill={BLUE} d="M49 146l8-8h8v16h-12zM205 148l8-8h8v15h-11z" />
      <Marks c={WHITE} at={[[68, 143, 22, 7], [80, 138, 14, 5], [225, 140, 11, 12]]} />
      {[246, 282, 320].map((x) => (
        <g key={x}>
          <Lines c={BLUE} w={8} dash="8 2" d={`M${x - 14} 188H${x + 16}M${x - 8} 196H${x + 8}`} />
          <Lines c={CYAN} w={3} dash="4 3" d={`M${x - 12} 182H${x + 12}M${x - 16} 192H${x + 18}M${x + 4} 206H${x + 18}M${x + 6} 214H${x + 16}`} />
          <Marks c="#d8b030" at={[[x - 2, 174, 7, 4]]} />
          <Marks c={WHITE} at={[[x - 4, 186, 4, 4], [x + 8, 185, 4, 4]]} />
        </g>
      ))}
      <Lines c={YELLOW} w={4} dash="5 3" d="M322 35H342M322 71H342" />
      <Lines c="#2a90a0" w={3} d="M319 42V64M343 38V70" />
      <Lines c={MAGENTA} w={3} dash="20 2" d="M347 36V64" />
    </Sheet>
  );
}

function OutgoingSheet() {
  return (
    <Sheet>
      <Lines c="#a9aeb2" w={3} d={rows(38, 346, [16, 23, 30, 37])} />
      <Lines c={BLUE} w={4} dash="4 3" d="M37 14V38" />
      <Lines c={MAGENTA} w={3} d="M31 20V34" />
      {[54, 100, 146, 191, 237].map((x, i) => (
        <g key={x}>
          <Lines c="#9a9fa4" w={3} d={`M${x} 14V200M${x + 6} 22V200M${x + 12} 28V200M${x + 18} 36V200`} />
          <path fill={BLUE} d={`M${x - 16} 62l8-4v-4h6v12h-14z`} />
          <Lines c={CYAN} w={6} dash="5 1" d={`M${x - 4} 54H${x + 20}M${x - 6} 62H${x + 22}M${x - 2} 97H${x + 22}`} />
          <path fill="#d4552a" d={`M${x - 16} 100l8-3h5v6l-5 5h-8z`} />
          <Marks c="#eaf4f8" at={[[x + 2, 48, 5, 3], [x - 2, 12, 4, 4], [x + 4, 20, 4, 4]]} />
          <path fill="#4aa8e0" d={`M${x - 2} 190h20v6l-4 4v10h-8l-2-9-6-4z`} />
          <Marks c={WHITE} at={[[x + 6, 198 + (i % 2), 6, 4]]} />
        </g>
      ))}
      <Lines c="#9a9fa4" w={2} d="M284 14V60M290 22V60M296 28V60" />
      <Lines c={RED} d={cols(55, 88, [288, 294, 300, 306])} />
      <Lines c="#4a90d8" w={8} dash="4 2" d="M280 48H302" />
      <Marks c="#b8c8e0" at={[[281, 88, 26, 7], [284, 97, 20, 6], [301, 108, 6, 6]]} />
    </Sheet>
  );
}

function GeneratorSheet() {
  return (
    <Sheet>
      <Lines c="#aeb3b6" w={3} d="M34 16H175M34 23H137M34 29H137M34 37H137" />
      <Lines c={BLUE} w={4} dash="4 3" d="M37 14V38" />
      <Lines c={MAGENTA} w={3} d="M29 20V32" />
      <Lines c={RED} d="M174 16H277M46 38V193H277M220 14V193M77 14V170M100 14V100M88 122V162M77 122V162" />
      <Lines c={RED} d={cols(122, 176, [101, 114, 128, 142, 157])} />
      <Lines c={CYAN} w={3} d="M88 101H179V123H75V101Z" />
      <Lines c={CYAN} w={3} dash="4 14" d="M96 119H176M96 105H110" />
      <path fill={BLUE} d="M50 119l22-14v17zM197 44l8-6h8l8-6-4 12h-20zM196 172l16-4 6 6-16 4z" />
      <Marks c="#eef6f8" at={[[76, 104, 13, 16], [190, 11, 6, 5], [75, 12, 4, 4], [99, 12, 4, 4], [218, 11, 5, 5], [218, 191, 5, 4], [100, 191, 4, 4]]} />
      <Lines c="#2aa0b0" w={3} d="M211 28H221V38H211ZM214 169H226V179H214ZM171 12H182V18H171" />
      <Marks c="#8a8ca8" at={[[70, 52, 8, 6], [97, 52, 6, 6], [71, 159, 8, 8], [82, 159, 7, 8]]} />
      <Marks c="#8a8c28" at={[[42, 40, 8, 4], [70, 41, 8, 3], [96, 41, 8, 3], [94, 75, 8, 4], [214, 76, 6, 4], [71, 147, 5, 4], [84, 147, 5, 4], [98, 147, 5, 4], [111, 147, 5, 4], [125, 147, 5, 4], [139, 147, 5, 4], [154, 147, 5, 4]]} />
      {[92, 107, 122, 137, 151].map((x) => (
        <g key={x}>
          <path fill={BLUE} d={`M${x} 190l12-14v14z`} />
          <Lines c="#4ac8d8" w={4} dash="3 2" d={`M${x + 3} 177H${x + 13}M${x + 8} 188H${x + 14}`} />
        </g>
      ))}
      <Marks c="#8a2226" at={[[158, 56, 4, 3]]} />
    </Sheet>
  );
}

function AtsSheetTwo() {
  return (
    <Sheet>
      <Feeders xs={[60, 222]} top={4} bottom={194} />
      <Lines c={RED} d="M60 53H145V72M67 60H140V72M75 67H134V72M82 92H138V86M60 134H150V150M82 142H140V150M138 176V187H165M150 176V180H165M60 194H302M67 200H302M75 208H302M83 214H302M60 192L84 214" />
      <Lines c={YELLOW} w={6} dash="5 2" d="M96 51V70M126 51V70M94 88V92M96 132V146M128 132V144" />
      <Lines c={WHITE} w={8} dash="3 4" d="M111 50V70M111 132V140" />
      <path fill={BLUE} d="M117 82l14-6v12l-11-2zM110 171l12-14 10-3v20z" />
      <Lines c={TEAL} w={3} d="M132 74H154V88H132ZM134 148H152V174H134Z" />
      <Marks c={WHITE} at={[[138, 77, 9, 8], [139, 158, 8, 8], [168, 178, 16, 4], [170, 184, 14, 4], [59, 50, 4, 4], [66, 58, 4, 4], [220, 191, 4, 4], [230, 199, 4, 4], [237, 206, 4, 4]]} />
      <Lines c={CYAN} w={3} dash="6 2" d="M158 75H178M156 80H170M160 84H168" />
      <rect x="56" y="109" width="191" height="21" fill="#16363e" />
      <Lines c={TEAL} w={3} d="M56 109H247V130H56ZM80 109V130M222 109V130" />
      <Lines c={CYAN} w={3} dash="4 3" d="M60 120H246" />
      <Lines c={CYAN} w={2} dash="2 5" d="M60 113H246M60 127H246" />
      <Marks c={MAGENTA} at={[[138, 111, 28, 4], [148, 118, 8, 4]]} />
      <Lines c="#9ad0d8" w={5} dash="4 3" d="M308 190V216" />
      <Lines c={MAGENTA} w={4} dash="3 1" d="M313 204H326" />
    </Sheet>
  );
}

/* ---------- model space ---------- */

function ViewCube() {
  return (
    <div className="flex flex-col items-center gap-[9px]">
      <svg viewBox="0 0 66 68" className="h-[68px] w-[66px]" role="img" aria-label="View cube">
        <circle cx="33" cy="34" r="27" fill="none" stroke="#474d56" strokeWidth="6" />
        <path fill="#b0b4b8" d="M21 21h25v25H21z" />
        <path fill="#9ba3ac" d="M26 26h15v15H26z" />
        <g fill="#a6a9ac" fontSize="10" fontWeight="700" textAnchor="middle" stroke="#212830" strokeWidth="2" paintOrder="stroke">
          <text x="33" y="10">N</text>
          <text x="33" y="66">S</text>
          <text x="6" y="38">W</text>
          <text x="61" y="38">E</text>
        </g>
        <text x="33" y="36" fill="#3a4250" fontSize="6" fontWeight="700" textAnchor="middle">
          TOP
        </text>
      </svg>
      <button
        type="button"
        className="flex h-[9px] w-[24px] items-center gap-px rounded-[2px] border border-[#aeb1bd] bg-[#8c90a0] pl-px text-[6px] text-[#d5d8e0]"
      >
        WCS
        <ChevronDown className="size-[5px]" />
      </button>
    </div>
  );
}

function ModelSpace() {
  return (
    <main className="relative min-w-0 flex-1 overflow-hidden bg-[#212830]">
      <div className="flex h-[136px] items-start justify-between pr-[9px] pl-[2px]">
        <p className="pt-[3px] text-[6px] text-[#d8dbdf]">[−][Top][2D Wireframe]</p>
        <div className="pt-[6px]">
          <ViewCube />
        </div>
      </div>
      <div className="grid grid-cols-7 gap-x-[4px] gap-y-[6px] pr-[15px] pl-[45px]">
        <MaterialList />
        <CableTable />
        <LegendSheet />
        <TerminalSheet />
        <CabinetFrontSheet />
        <CabinetInsideSheet />
        <CabinetSideSheet />
        <AtsSheet />
        <BusbarSheet />
        <ControlSheet />
        <OutgoingSheet />
        <GeneratorSheet />
        <AtsSheetTwo />
        <ControlSheet />
      </div>
      {/* zoom cursor */}
      <svg viewBox="0 0 12 12" className="absolute top-[30px] right-[265px] size-[11px]" aria-hidden="true">
        <circle cx="5" cy="5" r="3.5" fill="#8a9098" stroke="#e4e7eb" />
        <path stroke="#e4e7eb" strokeWidth="1.5" d="M7.5 7.5L11 11" />
      </svg>
    </main>
  );
}

function Workspace() {
  return (
    <div className="flex min-h-0 flex-1 bg-[#3b4453]">
      <DrawToolbar />
      <div className="flex min-w-0 flex-1 flex-col">
        <div className="flex min-h-0 flex-1">
          <ModelSpace />
          <div className="flex w-[8px] shrink-0 flex-col items-center bg-[#f0f0f0] text-[#555]">
            <ChevronUp className="mt-[2px] size-[6px] shrink-0" strokeWidth={4} />
            <span className="flex-[145]" />
            <span className="h-[8px] w-full bg-[#cdcdcd]" />
            <span className="flex-[232]" />
            <ChevronDown className="size-[6px] shrink-0" strokeWidth={4} />
          </div>
        </div>
        <div className="flex h-[10px] shrink-0 items-center border-y border-[#9aa0a8] bg-[#f0f0f0] text-[#444]">
          <ChevronLeft className="size-[8px] shrink-0" strokeWidth={3} />
          <span className="flex-[192]" />
          <span className="h-full w-[8px] bg-[#cdcdcd]" />
          <span className="flex-[692]" />
          <ChevronRight className="mr-[8px] size-[8px] shrink-0" strokeWidth={3} />
        </div>
      </div>
      <ModifyToolbar />
    </div>
  );
}

/* ---------- command line and layout tabs ---------- */

function CommandLine() {
  return (
    <section className="relative flex h-[28px] shrink-0 border-t border-[#3b4453] bg-[#2b3340]">
      <div className="flex w-[12px] shrink-0 flex-col items-center justify-between py-px text-[#e4e7eb]">
        <span className="w-[8px] border-y border-dotted border-[#aab0b8] py-px" />
        <button type="button" aria-label="Close command line">
          <X className="size-[7px]" strokeWidth={4} />
        </button>
        <button type="button" aria-label="Customize command line">
          <Wrench className="size-[8px]" fill="currentColor" />
        </button>
      </div>
      <div className="flex min-w-0 flex-1 flex-col font-['Liberation_Mono',monospace] text-[6px] text-[#2a2a2a]">
        <div className="h-[17px] border-b border-[#8a8a8a] bg-[#c7c7c7] pt-px pl-[2px] leading-[7px]">
          <p>[All/Center/Dynamic/Extents/Previous/Scale/Window/Object] &lt;real time&gt;:</p>
          <p>Press ESC or ENTER to exit, or right-click to display shortcut menu.</p>
        </div>
        <div className="flex flex-1 items-center gap-[2px] bg-white pl-[2px]">
          <svg viewBox="0 0 14 10" className="h-[7px] w-[13px]" aria-hidden="true">
            <path fill="#e8eaee" stroke="#777" d="M.5.5h8v9h-8z" />
            <path fill="none" stroke="#555" d="M2 3l2 2-2 2M5 7.5h2" />
            <path fill="#333" d="M10 4h4l-2 2z" />
          </svg>
          <input
            aria-label="Command"
            defaultValue="ZOOM"
            className="min-w-0 flex-1 bg-transparent font-bold text-[#1c1c1c]"
          />
        </div>
      </div>
      <p className="pointer-events-none absolute inset-x-0 top-[5px] text-center font-['Liberation_Sans',sans-serif] text-[21px] leading-[24px] font-bold text-[#c9c9c9] [text-shadow:1px_1px_0_#7c7c7c,-1px_-1px_0_#e4e4e4]">
        Copyright © FileThietKe.vn
      </p>
    </section>
  );
}

const layouts = [
  "001", "002", "003", "101", "201", "202", "203", "301", "302", "303", "304", "305", "306",
  "307", "401",
];

function StatusBar() {
  return (
    <footer className="flex h-[15px] shrink-0 items-start justify-between bg-[#222933] text-[6px] text-[#bcc2ca]">
      <div className="flex pl-[6px] leading-[10px]">
        <button
          type="button"
          className="h-[10px] w-[28px] bg-[#3b4453] font-bold text-white [clip-path:polygon(0_0,100%_0,25px_100%,4px_100%)]"
        >
          Model
        </button>
        {layouts.map((n, i) => (
          <button
            key={n}
            type="button"
            className={`h-[10px] bg-[#2d3542] [clip-path:polygon(0_0,100%_0,17px_100%,3px_100%)] ${i % 3 === 2 ? "w-[21px]" : "w-[20px]"}`}
          >
            {n}
          </button>
        ))}
        <button type="button" aria-label="New layout" className="flex h-[10px] w-[14px] items-center justify-center bg-[#2d3542]">
          <Plus className="size-[6px]" strokeWidth={3} />
        </button>
      </div>
      <p className="pt-[3px] pr-[3px] leading-[8px] text-white">
        Press pick button and drag vertically to zoom.
      </p>
    </footer>
  );
}

function SiteLogo() {
  return (
    <svg
      viewBox="0 0 110 32"
      className="pointer-events-none absolute top-[9px] right-[30px] h-[32px] w-[110px]"
      role="img"
      aria-label="File Thiết Kế.vn"
    >
      <path fill="#fff" stroke="#fff" strokeWidth="4" strokeLinejoin="round" d="M4 4h9l2 1h13v23H4z" />
      <path fill="#1ba0dc" d="M4 4h9l2 1h13v3H4z" />
      <path fill="#2fb4ec" d="M4 8h25v20H4z" />
      <g
        fontFamily="'Liberation Sans Narrow','Roboto Condensed','Liberation Sans',sans-serif"
        fontWeight="700"
        strokeLinejoin="round"
        paintOrder="stroke"
      >
        <text x="5" y="25" fontSize="16" fill="#fff">File</text>
        <g fill="#1ba6e2" stroke="#fff" strokeWidth="5">
          <text x="34" y="26" fontSize="16">Thiết</text>
          <text x="71" y="26" fontSize="16">Kế</text>
          <text x="90" y="26" fontSize="13">.vn</text>
        </g>
      </g>
    </svg>
  );
}

export default function App() {
  return (
    <div className="relative flex h-screen min-h-[480px] flex-col overflow-hidden bg-[#212830] font-['Open_Sans','Noto_Sans',sans-serif]">
      <Header />
      <FileTabs />
      <Toolbars />
      <Workspace />
      <CommandLine />
      <StatusBar />
      <SiteLogo />
    </div>
  );
}
